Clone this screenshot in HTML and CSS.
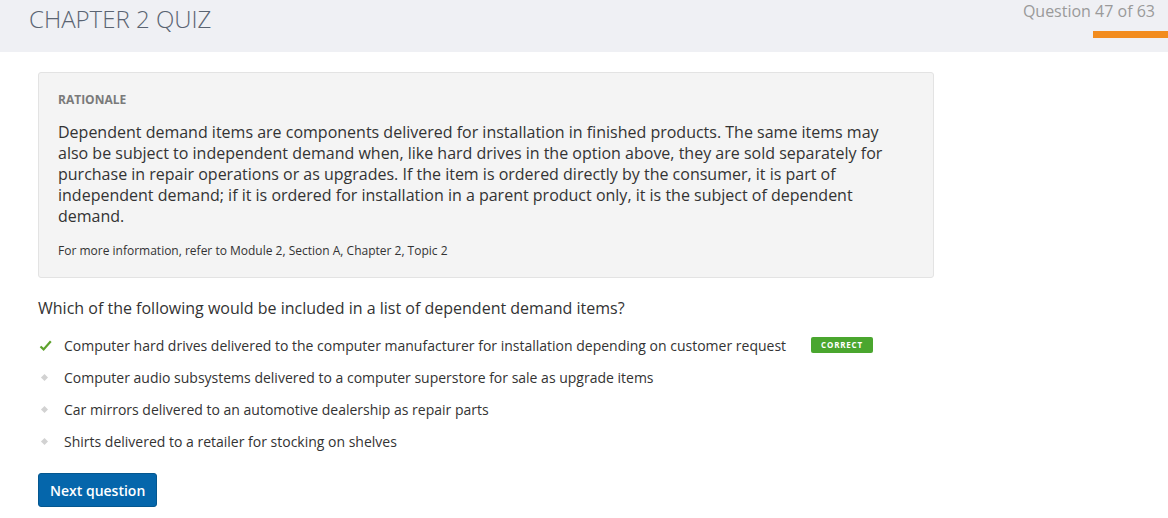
FILE: index.html
```html
<!DOCTYPE html>
<html>
<head>
<meta charset="utf-8">
<link rel="stylesheet" href="styles.css">
</head>
<body>
<header class="header">
  <h1 class="title">CHAPTER 2 QUIZ</h1>
  <div class="progress">
    <div class="counter">Question 47 of 63</div>
    <div class="bar"></div>
  </div>
</header>
<main class="main">
  <section class="rationale">
    <div class="label">RATIONALE</div>
    <p class="text">Dependent demand items are components delivered for installation in finished products. The same items may also be subject to independent demand when, like hard drives in the option above, they are sold separately for purchase in repair operations or as upgrades. If the item is ordered directly by the consumer, it is part of independent demand; if it is ordered for installation in a parent product only, it is the subject of dependent demand.</p>
    <p class="ref">For more information, refer to Module 2, Section A, Chapter 2, Topic 2</p>
  </section>
  <p class="question">Which of the following would be included in a list of dependent demand items?</p>
  <ul class="options">
    <li class="option">
      <span class="mark"><svg width="13" height="11" viewBox="0 0 13 11"><path d="M1.5 6.5 L4.6 9.4 L11.8 1.2" fill="none" stroke="#5ea22d" stroke-width="2.2"/></svg></span>
      <span class="otext">Computer hard drives delivered to the computer manufacturer for installation depending on customer request</span>
      <span class="badge">CORRECT</span>
    </li>
    <li class="option"><span class="mark"><span class="dot"></span></span><span class="otext">Computer audio subsystems delivered to a computer superstore for sale as upgrade items</span></li>
    <li class="option"><span class="mark"><span class="dot"></span></span><span class="otext">Car mirrors delivered to an automotive dealership as repair parts</span></li>
    <li class="option"><span class="mark"><span class="dot"></span></span><span class="otext">Shirts delivered to a retailer for stocking on shelves</span></li>
  </ul>
  <button class="next">Next question</button>
</main>
</body>
</html>
```
FILE: styles.css
```css
* { box-sizing: border-box; }
html, body { margin: 0; padding: 0; background: #fff; }
body { font-family: "Open Sans", "Liberation Sans", sans-serif; color: #333; }

.header {
  height: 52px;
  background: #eff0f4;
  display: flex;
  justify-content: space-between;
  align-items: flex-start;
}
.title {
  margin: 4px 0 0 29px;
  font-weight: 300;
  font-size: 24px;
  line-height: 30px;
  color: #5a6472;
}
.progress {
  display: flex;
  flex-direction: column;
  align-items: flex-end;
}
.counter {
  margin: 1px 13px 0 0;
  font-size: 16px;
  line-height: 21px;
  color: #9a9a9a;
}
.bar {
  margin-top: 9px;
  width: 75px;
  height: 7px;
  background: #f28c1e;
}

.main { padding: 20px 38px 0 38px; }

.rationale {
  width: 896px;
  background: #f4f4f4;
  border: 1px solid #e3e3e3;
  border-radius: 3px;
  padding: 19px 20px 17px 19px;
}
.label {
  font-size: 12px;
  font-weight: 700;
  color: #7a7a7a;
  line-height: 16px;
}
.text {
  margin: 14px 0 0 0;
  font-size: 16px;
  line-height: 21px;
  color: #333;
  max-width: 840px;
}
.ref {
  margin: 15px 0 0 0;
  font-size: 12px;
  line-height: 18px;
  color: #333;
}
.question {
  margin: 18px 0 0 0;
  font-size: 16px;
  line-height: 24px;
  color: #333;
}
.options {
  list-style: none;
  margin: 9px 0 0 0;
  padding: 0;
}
.option {
  display: flex;
  align-items: center;
  height: 32px;
  font-size: 14px;
  color: #333;
}
.mark {
  width: 26px;
  display: flex;
  align-items: center;
  padding-left: 1px;
}
.dot {
  width: 5px;
  height: 5px;
  margin-left: 3px;
  background: #d2d2d2;
  transform: rotate(45deg);
}
.badge {
  margin-left: 25px;
  background: #4aa62f;
  color: #fff;
  font-size: 8px;
  font-weight: 700;
  letter-spacing: 0.8px;
  padding: 0 10px;
  height: 16px;
  line-height: 16px;
  border-radius: 2px;
}
.next {
  margin-top: 16px;
  height: 34px;
  padding: 0 11px;
  background: #0566ab;
  border: 1px solid #04578f;
  border-radius: 3px;
  color: #fff;
  font-family: "Open Sans", "Liberation Sans", sans-serif;
  font-size: 14px;
  font-weight: 600;
}
```
